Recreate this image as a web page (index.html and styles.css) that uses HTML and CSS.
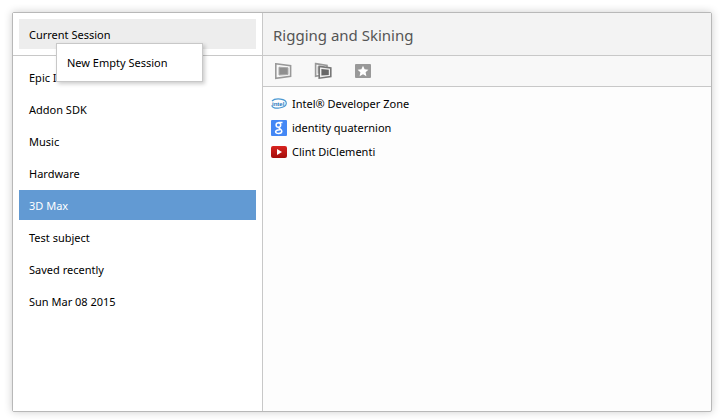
FILE: index.html
```html
<!DOCTYPE html>
<html lang="en">
<head>
<meta charset="utf-8">
<title>Sessions</title>
<link rel="stylesheet" href="styles.css">
</head>
<body>
<main class="panel">
  <aside class="sidebar">
    <div class="current">
      <button class="session session-current" type="button">Current Session</button>
      <div class="menu" role="menu">
        <button class="menu-item" type="button" role="menuitem">New Empty Session</button>
      </div>
    </div>
    <nav class="sessions">
      <button class="session" type="button">Epic I</button>
      <button class="session" type="button">Addon SDK</button>
      <button class="session" type="button">Music</button>
      <button class="session" type="button">Hardware</button>
      <button class="session session-selected" type="button">3D Max</button>
      <button class="session" type="button">Test subject</button>
      <button class="session" type="button">Saved recently</button>
      <button class="session" type="button">Sun Mar 08 2015</button>
    </nav>
  </aside>
  <section class="content">
    <header class="title-bar"><h1 class="title">Rigging and Skining</h1></header>
    <div class="toolbar">
      <button class="tool" type="button" aria-label="Restore session">
        <svg width="18" height="18" viewBox="0 0 18 18"><path d="M1.8 1.8 16.6 3.8V14.2L1.8 16.4Z" fill="#f8f8f8" stroke="#999" stroke-width="1.6"/><path d="M5 5.2 14 5.8V12.5L5 13Z" fill="#8f8f8f" stroke="#aaa"/></svg>
      </button>
      <button class="tool" type="button" aria-label="Restore in new window">
        <svg width="18" height="18" viewBox="0 0 18 18"><path d="M1.6 1.6 13 3.5V12L1.6 14.2Z" fill="#f8f8f8" stroke="#999" stroke-width="1.6"/><path d="M3.6 4.3 11 5V11L3.6 11.8Z" fill="#aaa"/><path d="M5.2 4.4 16.8 6V14.6L5.2 16.2Z" fill="#eee" stroke="#777" stroke-width="1.6"/><path d="M7.4 7 14.8 7.7V13L7.4 13.6Z" fill="#666"/></svg>
      </button>
      <button class="tool" type="button" aria-label="Bookmark session">
        <svg width="18" height="18" viewBox="0 0 18 18"><rect x="1" y="2" width="16" height="14" rx="1" fill="#999"/><path d="m9 3.8 1.6 3.5 3.8.4-2.8 2.6.8 3.9L9 12.2l-3.4 2 .8-3.9-2.8-2.6 3.8-.4Z" fill="#fff"/></svg>
      </button>
    </div>
    <ul class="tabs">
      <li><a class="tab" href="#intel">
        <svg width="16" height="16" viewBox="0 0 16 16"><path d="M1 5C4 1.8 15.4 2.3 15.3 7.2 15.2 12 1.5 14.5.7 9.3" fill="none" stroke="#4a98d2" stroke-width="1.2"/><text class="intel-mark" x="1" y="10">intel</text></svg>
        <span>Intel® Developer Zone</span></a></li>
      <li><a class="tab" href="#identity">
        <svg width="16" height="16" viewBox="0 0 16 16"><rect width="16" height="16" rx="1" fill="#4387f5"/><g fill="none" stroke="#fff" stroke-width="1.5"><ellipse cx="7.4" cy="5" rx="2.3" ry="2.3"/><path d="M7.5 2.5H11.5M8.5 7.2C6.7 8.6 10.8 8.8 10.8 11.3 10.8 14.2 4.6 14.2 4.6 11.8 4.6 10.3 6.7 9.7 9 9.8"/></g></svg>
        <span>identity quaternion</span></a></li>
      <li><a class="tab" href="#clint">
        <svg width="16" height="16" viewBox="0 0 16 16"><defs><linearGradient id="red" x2="0" y2="1"><stop stop-color="#d8231f"/><stop offset="1" stop-color="#a30d0b"/></linearGradient></defs><rect y="2" width="16" height="12" rx="2" fill="url(#red)"/><path d="M6 5v6l5-3Z" fill="#fff"/></svg>
        <span>Clint DiClementi</span></a></li>
    </ul>
  </section>
</main>
</body>
</html>
```
FILE: styles.css
```css
* { box-sizing: border-box; }

body {
  margin: 0;
  height: 100vh;
  padding: 12px 13px 8px 12px;
  background: #fff;
  color: #000;
  font: 11px/16px "Segoe UI", "Noto Sans", "Open Sans", sans-serif;
}

button {
  border: 0;
  background: none;
  color: inherit;
  font: inherit;
  text-align: left;
}

.panel {
  display: grid;
  grid-template-columns: 250px 1fr;
  height: 100%;
  border: 1px solid #b8b8b8;
  border-radius: 2px;
  background: #fdfdfd;
  box-shadow: 0 0 8px rgba(0, 0, 0, 0.2);
}

.sidebar {
  border-right: 1px solid #c8c8c8;
  background: #fff;
}

.current {
  position: relative;
  padding: 6px;
  border-bottom: 1px solid #c8c8c8;
}

.session {
  display: block;
  width: 100%;
  height: 30px;
  padding: 2px 10px 0;
}

.session-current { background: #ededed; }

.session-selected {
  background: #629ad3;
  color: #fff;
}

.sessions {
  display: grid;
  gap: 2px;
  padding: 6px;
}

.menu {
  position: absolute;
  top: 30px;
  left: 43px;
  width: 147px;
  border: 1px solid #c8c8c8;
  background: #fff;
  box-shadow: 2px 2px 4px rgba(0, 0, 0, 0.2);
}

.menu-item {
  width: 100%;
  height: 37px;
  padding: 0 10px;
}

.title-bar {
  display: flex;
  align-items: center;
  height: 43px;
  padding: 2px 10px 0;
  border-bottom: 1px solid #c8c8c8;
  background: #f3f3f3;
}

.title {
  margin: 0;
  color: #555;
  font-size: 15px;
  font-weight: 400;
}

.toolbar {
  display: flex;
  align-items: center;
  gap: 22px;
  height: 31px;
  padding: 0 11px;
  border-bottom: 1px solid #c8c8c8;
  background: #f8f8f8;
}

.tool {
  display: flex;
  padding: 0;
}

.tabs {
  margin: 0;
  padding: 5px 8px;
  list-style: none;
}

.tab {
  display: flex;
  align-items: center;
  gap: 5px;
  height: 24px;
  color: inherit;
  text-decoration: none;
}

.intel-mark {
  fill: #1f78bd;
  font: bold 6px "Liberation Sans", sans-serif;
}
```
